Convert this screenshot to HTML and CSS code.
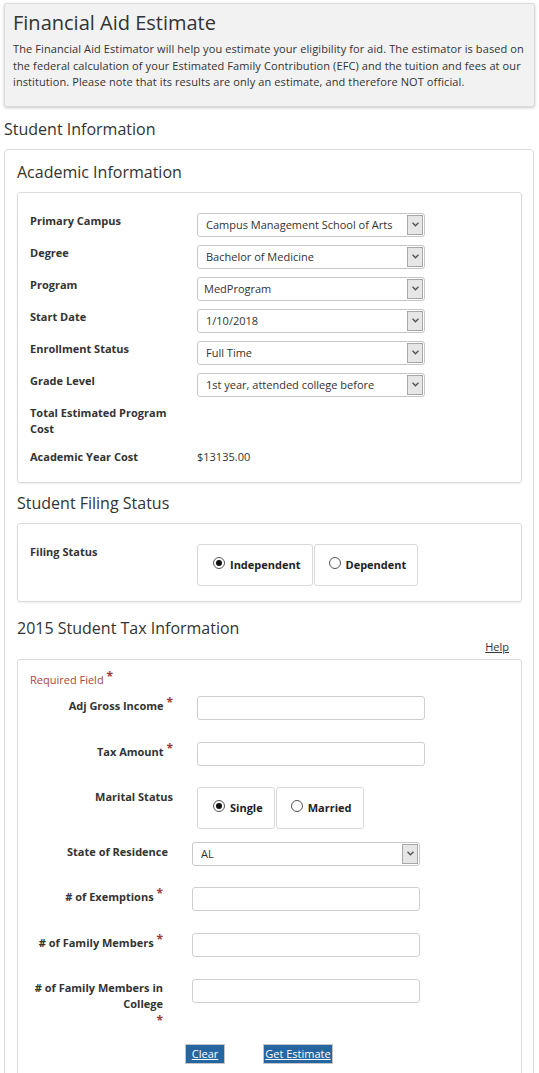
FILE: index.html
```html
<!DOCTYPE html>
<html lang="en">
<head>
<meta charset="utf-8">
<title>Financial Aid Estimate</title>
<link rel="stylesheet" href="styles.css">
</head>
<body>
<div class="page">
  <div class="intro">
    <h1 class="intro-title">Financial Aid Estimate</h1>
    <p class="intro-text">The Financial Aid Estimator will help you estimate your eligibility for aid. The estimator is based on the federal calculation of your Estimated Family Contribution (EFC) and the tuition and fees at our institution. Please note that its results are only an estimate, and therefore NOT official.</p>
  </div>

  <h2 class="page-heading">Student Information</h2>

  <div class="panel">
    <h3 class="section-heading">Academic Information</h3>
    <div class="box box-academic">
      <div class="row">
        <div class="lbl">Primary Campus</div>
        <div class="select"><span class="select-val">Campus Management School of Arts</span><span class="select-arrow"><svg width="7" height="5" viewBox="0 0 7 5"><path d="M0.5 0.8 L3.5 3.8 L6.5 0.8" fill="none" stroke="#555" stroke-width="1.4"/></svg></span></div>
      </div>
      <div class="row">
        <div class="lbl">Degree</div>
        <div class="select"><span class="select-val">Bachelor of Medicine</span><span class="select-arrow"><svg width="7" height="5" viewBox="0 0 7 5"><path d="M0.5 0.8 L3.5 3.8 L6.5 0.8" fill="none" stroke="#555" stroke-width="1.4"/></svg></span></div>
      </div>
      <div class="row">
        <div class="lbl">Program</div>
        <div class="select"><span class="select-val tight">MedProgram</span><span class="select-arrow"><svg width="7" height="5" viewBox="0 0 7 5"><path d="M0.5 0.8 L3.5 3.8 L6.5 0.8" fill="none" stroke="#555" stroke-width="1.4"/></svg></span></div>
      </div>
      <div class="row">
        <div class="lbl">Start Date</div>
        <div class="select"><span class="select-val">1/10/2018</span><span class="select-arrow"><svg width="7" height="5" viewBox="0 0 7 5"><path d="M0.5 0.8 L3.5 3.8 L6.5 0.8" fill="none" stroke="#555" stroke-width="1.4"/></svg></span></div>
      </div>
      <div class="row">
        <div class="lbl">Enrollment Status</div>
        <div class="select"><span class="select-val">Full Time</span><span class="select-arrow"><svg width="7" height="5" viewBox="0 0 7 5"><path d="M0.5 0.8 L3.5 3.8 L6.5 0.8" fill="none" stroke="#555" stroke-width="1.4"/></svg></span></div>
      </div>
      <div class="row">
        <div class="lbl">Grade Level</div>
        <div class="select"><span class="select-val">1st year, attended college before</span><span class="select-arrow"><svg width="7" height="5" viewBox="0 0 7 5"><path d="M0.5 0.8 L3.5 3.8 L6.5 0.8" fill="none" stroke="#555" stroke-width="1.4"/></svg></span></div>
      </div>
      <div class="row row-total">
        <div class="lbl">Total Estimated Program Cost</div>
        <div class="val"></div>
      </div>
      <div class="row row-cost">
        <div class="lbl">Academic Year Cost</div>
        <div class="val">$13135.00</div>
      </div>
    </div>

    <h3 class="section-heading">Student Filing Status</h3>
    <div class="box box-filing">
      <div class="row">
        <div class="lbl">Filing Status</div>
        <div class="radios">
          <div class="radio"><span class="dot checked"></span><span class="radio-text">Independent</span></div>
          <div class="radio"><span class="dot"></span><span class="radio-text">Dependent</span></div>
        </div>
      </div>
    </div>

    <h3 class="section-heading heading-tax">2015 Student Tax Information</h3>
    <div class="help-line"><a class="help" href="#">Help</a></div>
    <div class="box box-tax">
      <div class="required">Required Field <span class="star">*</span></div>

      <div class="trow">
        <div class="tlbl">Adj Gross Income <span class="star">*</span></div>
        <div class="input"></div>
      </div>
      <div class="trow trow-tax">
        <div class="tlbl">Tax Amount <span class="star">*</span></div>
        <div class="input"></div>
      </div>
      <div class="trow trow-marital">
        <div class="tlbl">Marital Status</div>
        <div class="radios">
          <div class="radio"><span class="dot checked"></span><span class="radio-text">Single</span></div>
          <div class="radio"><span class="dot"></span><span class="radio-text">Married</span></div>
        </div>
      </div>
      <div class="trow lower trow-state">
        <div class="tlbl">State of Residence</div>
        <div class="select"><span class="select-val">AL</span><span class="select-arrow"><svg width="7" height="5" viewBox="0 0 7 5"><path d="M0.5 0.8 L3.5 3.8 L6.5 0.8" fill="none" stroke="#555" stroke-width="1.4"/></svg></span></div>
      </div>
      <div class="trow lower">
        <div class="tlbl"># of Exemptions <span class="star">*</span></div>
        <div class="input"></div>
      </div>
      <div class="trow lower">
        <div class="tlbl"># of Family Members <span class="star">*</span></div>
        <div class="input"></div>
      </div>
      <div class="trow lower trow-college">
        <div class="tlbl"># of Family Members in College <span class="star star-block">*</span></div>
        <div class="input"></div>
      </div>

      <div class="actions">
        <a class="btn btn-clear" href="#">Clear</a>
        <a class="btn btn-estimate" href="#">Get Estimate</a>
      </div>
    </div>
  </div>
</div>
</body>
</html>
```

FILE: styles.css
```css
* { box-sizing: border-box; }

html, body {
  margin: 0;
  padding: 0;
  background: #fff;
}

body {
  font-family: "Open Sans", "Liberation Sans", Arial, sans-serif;
  font-size: 11px;
  color: #333;
  width: 539px;
}

.page {
  padding: 3px 5px 0 4px;
}

.intro {
  background: #f2f2f2;
  border: 1px solid #dcdcdc;
  border-radius: 3px;
  box-shadow: 0 1px 3px rgba(0, 0, 0, 0.22);
  padding: 6px 8px 15px 8px;
  margin-right: -1px;
}

.intro-title {
  margin: 0 0 5px 0;
  font-size: 20px;
  font-weight: normal;
  line-height: 26px;
  color: #333;
}

.intro-text {
  margin: 0;
  font-size: 11px;
  line-height: 16.5px;
  letter-spacing: 0.1px;
  color: #333;
}

.page-heading {
  margin: 11px 0 9px 0;
  font-size: 16px;
  font-weight: normal;
  line-height: 22px;
  color: #333;
}

.panel {
  border: 1px solid #dcdcdc;
  border-radius: 4px;
  padding: 11px 11px 20px 12px;
  min-height: 960px;
}

.section-heading {
  margin: 9px 0 9px 0;
  font-size: 16px;
  font-weight: normal;
  line-height: 22px;
  color: #333;
}

.panel > .section-heading:first-child { margin-top: 0; }

.heading-tax {
  margin-top: 15px;
  margin-bottom: 0;
}

.box {
  border: 1px solid #dcdcdc;
  border-radius: 3px;
  box-shadow: 0 1px 2px rgba(0, 0, 0, 0.08);
  padding: 20px 12px 15px 12px;
}

.box-academic { padding-bottom: 17px; }

.row {
  display: flex;
  align-items: flex-start;
  min-height: 24px;
  margin-bottom: 8px;
}

.row:last-child { margin-bottom: 0; }

.row-total { margin-bottom: 12px; }

.row-cost { min-height: 0; }

.lbl {
  width: 152px;
  margin-right: 15px;
  flex: none;
  font-weight: bold;
  line-height: 16px;
  color: #333;
}

.val {
  line-height: 16px;
  color: #333;
}

.select {
  width: 228px;
  height: 24px;
  flex: none;
  border: 1px solid #c8c8c8;
  border-radius: 3px;
  background: #fff;
  display: flex;
  align-items: stretch;
  overflow: hidden;
}

.select-val {
  flex: 1;
  padding-left: 8px;
  line-height: 22px;
  color: #333;
  white-space: nowrap;
}

.select-val.tight { padding-left: 6px; }

.select-arrow {
  width: 16px;
  margin: 1px;
  border: 1px solid #a8a8a8;
  background: #e6e6e6;
  display: flex;
  align-items: center;
  justify-content: center;
}

.radios {
  display: flex;
  gap: 0;
}

.radio {
  height: 42px;
  border: 1px solid #d9d9d9;
  border-radius: 3px;
  display: flex;
  align-items: center;
  padding: 0 11px 0 15px;
  font-weight: bold;
  color: #222;
}

.radio + .radio { margin-left: 1px; padding-left: 14px; }

.dot {
  width: 12px;
  height: 12px;
  border-radius: 50%;
  border: 1px solid #555;
  background: #fff;
  margin-right: 5px;
  margin-top: -4px;
  display: flex;
  align-items: center;
  justify-content: center;
}

.dot.checked::after {
  content: "";
  width: 6px;
  height: 6px;
  border-radius: 50%;
  background: #111;
}

.radio-text {
  line-height: 16px;
}

.help-line {
  display: flex;
  justify-content: flex-end;
  padding-right: 13px;
  line-height: 16px;
  margin-bottom: 4px;
}

.help {
  color: #333;
  text-decoration: underline;
}

.box-tax {
  padding: 12px 12px 20px 12px;
  box-shadow: none;
}

.required {
  color: #a8453f;
  line-height: 16px;
  margin-bottom: 8px;
}

.star {
  color: #9b3a36;
  font-weight: bold;
  font-size: 12px;
  vertical-align: top;
  line-height: 10px;
}

.trow {
  display: flex;
  align-items: flex-start;
  margin-bottom: 22px;
}

.trow-tax { margin-bottom: 21px; }

.trow-marital { margin-bottom: 13px; }

.trow-state { margin-bottom: 21px; }

.tlbl {
  width: 143px;
  margin-right: 24px;
  flex: none;
  text-align: right;
  font-weight: bold;
  line-height: 16px;
  padding-top: 2px;
  color: #333;
}

.trow.lower .tlbl {
  width: 133px;
  margin-right: 29px;
}

.trow.trow-state .tlbl {
  width: 138px;
  margin-right: 24px;
}

.trow-college .tlbl { padding-top: 1px; }

.star-block {
  display: block;
  line-height: 14px;
  margin-top: 2px;
}

.input {
  width: 228px;
  height: 24px;
  flex: none;
  border: 1px solid #cfcfcf;
  border-radius: 3px;
  background: #fff;
}

.trow-college { margin-bottom: 16px; }

.actions {
  display: flex;
  gap: 38px;
  margin-left: 155px;
}

.btn {
  display: inline-block;
  height: 20px;
  line-height: 18px;
  padding: 0;
  text-align: center;
  background: #2566a0;
  border: 1px solid #c4c4c4;
  color: #fff;
  text-decoration: underline;
  font-size: 11px;
}

.btn-clear { width: 40px; }

.btn-estimate { width: 70px; }
```
